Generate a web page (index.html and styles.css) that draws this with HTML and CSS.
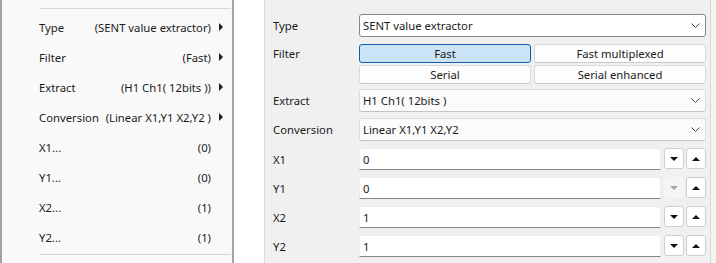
FILE: index.html
```html
<!DOCTYPE html>
<html lang="en">
<head>
    <meta charset="UTF-8">
    <title>SENT value extractor</title>
    <link rel="stylesheet" href="styles.css">
</head>
<body>
    <div class="menu">
        <div class="menu-sep"></div>
        <div class="menu-item"><span class="menu-label">Type</span><span class="menu-value">(SENT value extractor)</span><span class="menu-arrow"></span></div>
        <div class="menu-item"><span class="menu-label">Filter</span><span class="menu-value">(Fast)</span><span class="menu-arrow"></span></div>
        <div class="menu-item"><span class="menu-label">Extract</span><span class="menu-value">(H1 Ch1( 12bits ))</span><span class="menu-arrow"></span></div>
        <div class="menu-item"><span class="menu-label">Conversion</span><span class="menu-value">(Linear X1,Y1 X2,Y2 )</span><span class="menu-arrow"></span></div>
        <div class="menu-item"><span class="menu-label">X1...</span><span class="menu-value">(0)</span><span class="menu-gap"></span></div>
        <div class="menu-item"><span class="menu-label">Y1...</span><span class="menu-value">(0)</span><span class="menu-gap"></span></div>
        <div class="menu-item"><span class="menu-label">X2...</span><span class="menu-value">(1)</span><span class="menu-gap"></span></div>
        <div class="menu-item"><span class="menu-label">Y2...</span><span class="menu-value">(1)</span><span class="menu-gap"></span></div>
        <div class="menu-sep bottom"></div>
    </div>

    <div class="spacer"></div>

    <div class="panel">
        <div class="row row-type">
            <label>Type</label>
            <div class="combo focused"><span>SENT value extractor</span><svg class="chev" width="9" height="5" viewBox="0 0 9 5"><path d="M0.5 0.5 L4.5 4.5 L8.5 0.5" fill="none" stroke="#444" stroke-width="1"/></svg></div>
        </div>
        <div class="row row-filter">
            <label>Filter</label>
            <div class="choices">
                <button class="choice selected">Fast</button>
                <button class="choice">Fast multiplexed</button>
                <button class="choice">Serial</button>
                <button class="choice">Serial enhanced</button>
            </div>
        </div>
        <div class="row row-extract">
            <label>Extract</label>
            <div class="combo"><span>H1 Ch1( 12bits )</span><svg class="chev" width="9" height="5" viewBox="0 0 9 5"><path d="M0.5 0.5 L4.5 4.5 L8.5 0.5" fill="none" stroke="#444" stroke-width="1"/></svg></div>
        </div>
        <div class="row row-conv">
            <label>Conversion</label>
            <div class="combo"><span>Linear X1,Y1 X2,Y2</span><svg class="chev" width="9" height="5" viewBox="0 0 9 5"><path d="M0.5 0.5 L4.5 4.5 L8.5 0.5" fill="none" stroke="#444" stroke-width="1"/></svg></div>
        </div>
        <div class="row row-num">
            <label>X1</label>
            <div class="spin">
                <input type="text" value="0">
                <button class="spin-btn"><span class="tri down"></span></button>
                <button class="spin-btn"><span class="tri up"></span></button>
            </div>
        </div>
        <div class="row row-num">
            <label>Y1</label>
            <div class="spin">
                <input type="text" value="0">
                <button class="spin-btn disabled"><span class="tri down"></span></button>
                <button class="spin-btn"><span class="tri up"></span></button>
            </div>
        </div>
        <div class="row row-num">
            <label>X2</label>
            <div class="spin">
                <input type="text" value="1">
                <button class="spin-btn"><span class="tri down"></span></button>
                <button class="spin-btn"><span class="tri up"></span></button>
            </div>
        </div>
        <div class="row row-num">
            <label>Y2</label>
            <div class="spin">
                <input type="text" value="1">
                <button class="spin-btn"><span class="tri down"></span></button>
                <button class="spin-btn"><span class="tri up"></span></button>
            </div>
        </div>
    </div>
    <div class="edge"></div>
</body>
</html>
```

FILE: styles.css
```css
body {
    margin: 0;
    height: 263px;
    display: flex;
    background-color: #ffffff;
    font-family: "Noto Sans", "Liberation Sans", sans-serif;
    font-size: 11.3px;
    color: #1b1b1b;
    overflow: hidden;
}

/* left: context menu */
.menu {
    width: 230px;
    background-color: #f9f9f9;
    border-left: 2px solid #a3a3a3;
    border-right: 2px solid #a3a3a3;
    padding-top: 8px;
    white-space: nowrap;
}
.menu-sep {
    height: 1px;
    margin: 0 1px 3px 38px;
    background-color: #d6d6d6;
}
.menu-sep.bottom {
    margin-top: 2px;
    margin-bottom: 0;
}
.menu-item {
    height: 30px;
    display: flex;
    align-items: center;
    padding-left: 37px;
}
.menu-value {
    flex: 1;
    text-align: right;
}
.menu-arrow {
    width: 0;
    height: 0;
    margin: 0 9px 0 8px;
    border-top: 4px solid transparent;
    border-bottom: 4px solid transparent;
    border-left: 4px solid #1b1b1b;
}
.menu-gap {
    width: 21px;
}

.spacer {
    width: 30px;
}

/* right: property panel */
.panel {
    width: 433px;
    background-color: #f0f0f0;
    border-left: 1px solid #d9d9d9;
    border-right: 1px solid #d9d9d9;
    padding: 14px 4px 0 8px;
    white-space: nowrap;
}
.edge {
    flex: 1;
    background-color: #f3f3f3;
}
.row {
    display: flex;
    align-items: center;
}
.row label {
    width: 86px;
}
.row-type { height: 23px; margin-bottom: 7px; }
.row-filter { align-items: flex-start; margin-bottom: 5px; }
.row-filter label { line-height: 19px; }
.row-extract { height: 23px; margin-bottom: 6px; }
.row-conv { height: 23px; margin-bottom: 7px; }
.row-num { height: 22px; margin-bottom: 7px; }

.combo {
    flex: 1;
    height: 23px;
    box-sizing: border-box;
    display: flex;
    align-items: center;
    justify-content: space-between;
    padding: 0 5px 0 3px;
    background-color: #fbfbfb;
    border: 1px solid #dcdcdc;
    border-bottom-color: #c4c4c4;
    border-radius: 3px;
}
.combo.focused {
    background-color: #ffffff;
    border-color: #868686;
}

.choices {
    flex: 1;
    display: grid;
    grid-template-columns: 1fr 1fr;
    grid-auto-rows: 19px;
    gap: 2px 3px;
}
.choice {
    font: inherit;
    color: inherit;
    padding: 0;
    background-color: #fdfdfd;
    border: 1px solid #dadada;
    border-bottom-color: #cacaca;
    border-radius: 3px;
}
.choice.selected {
    background-color: #cce4f7;
    border-color: #0f5ea8;
}

.spin {
    flex: 1;
    display: flex;
    gap: 2px;
}
.spin input {
    flex: 1;
    min-width: 0;
    height: 22px;
    box-sizing: border-box;
    margin: 0 1px 0 0;
    padding: 0 3px;
    font: inherit;
    color: inherit;
    background-color: #ffffff;
    border: 1px solid #ececec;
    border-bottom-color: #868686;
    border-radius: 3px 3px 0 0;
    outline: none;
}
.spin-btn {
    width: 20px;
    height: 21px;
    padding: 0;
    display: flex;
    align-items: center;
    justify-content: center;
    background-color: #ffffff;
    border: 1px solid #cfcfcf;
    border-radius: 3px;
}
.spin-btn.disabled {
    background-color: #f5f5f5;
    border-color: #f5f5f5;
}
.tri {
    width: 0;
    height: 0;
    border-left: 4px solid transparent;
    border-right: 4px solid transparent;
}
.tri.down { border-top: 4px solid #111111; }
.tri.up { border-bottom: 4px solid #111111; }
.spin-btn.disabled .tri.down { border-top-color: #a8a8a8; }
```
